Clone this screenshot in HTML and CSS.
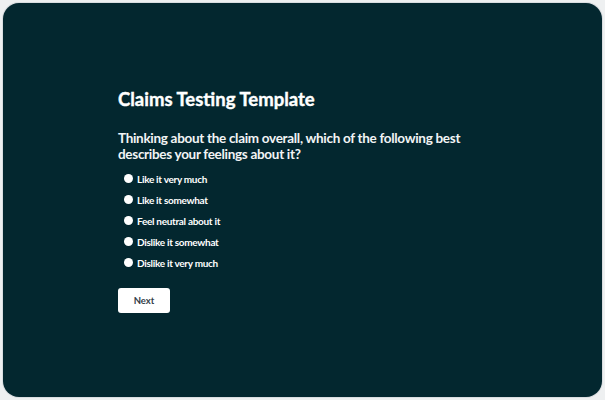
FILE: index.html
```html
<!DOCTYPE html>
<html lang="en">
<head>
    <meta charset="UTF-8">
    <title>Claims Testing Template</title>
    <link rel="stylesheet" href="styles.css">
</head>
<body>
    <div class="card">
        <div class="survey">
            <h1 class="title">Claims Testing Template</h1>
            <p class="question">Thinking about the claim overall, which of the following best describes your feelings about it?</p>
            <ul class="options">
                <li class="option"><span class="dot"></span>Like it very much</li>
                <li class="option"><span class="dot"></span>Like it somewhat</li>
                <li class="option"><span class="dot"></span>Feel neutral about it</li>
                <li class="option"><span class="dot"></span>Dislike it somewhat</li>
                <li class="option"><span class="dot"></span>Dislike it very much</li>
            </ul>
            <button class="next-btn">Next</button>
        </div>
    </div>
</body>
</html>
```

FILE: styles.css
```css
html, body {
    margin: 0;
    padding: 0;
}

body {
    width: 605px;
    height: 400px;
    background-color: #eef0f1;
    font-family: "Lato", "Liberation Sans", sans-serif;
    padding: 3px;
    box-sizing: border-box;
}

.card {
    height: 394px;
    background-color: #03272f;
    border-radius: 16px;
    box-shadow: 0 0 0 1px #d9dde0;
    box-sizing: border-box;
    padding: 84px 0 0 115px;
}

.title {
    margin: 0;
    color: #ffffff;
    font-size: 18.5px;
    font-weight: 700;
    line-height: 24px;
    -webkit-text-stroke: 0.4px #ffffff;
}

.question {
    margin: 19px 0 0 0;
    width: 345px;
    color: #f2f4f5;
    font-size: 13.5px;
    font-weight: 700;
    line-height: 16px;
    letter-spacing: -0.3px;
}

.options {
    list-style: none;
    margin: 6px 0 0 6px;
    padding: 0;
}

.option {
    display: flex;
    align-items: center;
    height: 21px;
    color: #ffffff;
    font-size: 10px;
    font-weight: 700;
    letter-spacing: -0.3px;
}

.dot {
    width: 9px;
    height: 9px;
    border-radius: 50%;
    background-color: #ffffff;
    margin-right: 4px;
}

.next-btn {
    margin-top: 15px;
    width: 52px;
    height: 25px;
    background-color: #ffffff;
    border: none;
    border-radius: 3px;
    color: #333e48;
    font-family: "Lato", sans-serif;
    font-size: 9.5px;
    font-weight: 700;
    padding: 0;
}
```
